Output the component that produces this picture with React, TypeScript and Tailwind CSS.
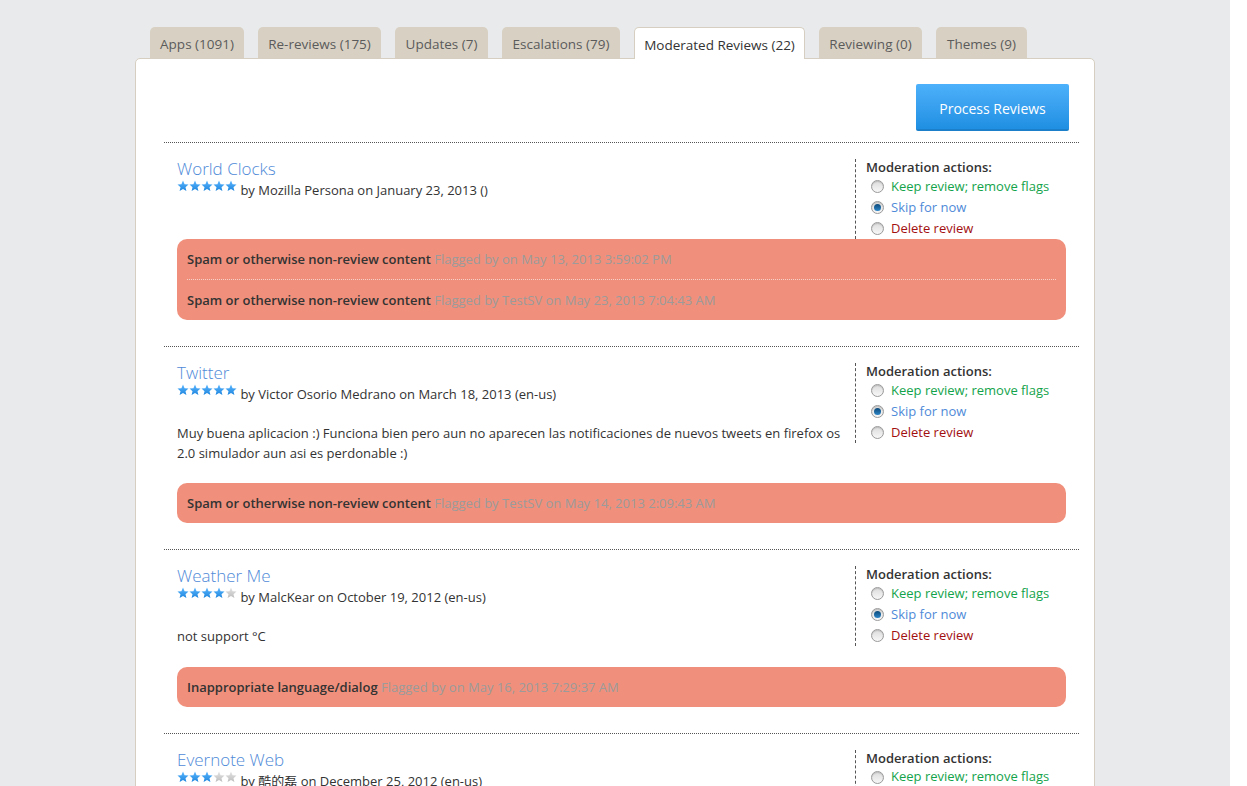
import React from "react";

type Flag = { reason: string; by: string };
type Review = {
    app: string;
    stars: number;
    author: string;
    date: string;
    body?: string;
    flags: Flag[];
};

const tabs = [
    { label: "Apps (1091)", width: "w-[94px]", active: false },
    { label: "Re-reviews (175)", width: "w-[123px]", active: false },
    { label: "Updates (7)", width: "w-[93px]", active: false },
    { label: "Escalations (79)", width: "w-[118px]", active: false },
    { label: "Moderated Reviews (22)", width: "w-[171px]", active: true },
    { label: "Reviewing (0)", width: "w-[103px]", active: false },
    { label: "Themes (9)", width: "w-[91px]", active: false },
];

const reviews: Review[] = [
    {
        app: "World Clocks",
        stars: 5,
        author: "Mozilla Persona",
        date: "January 23, 2013 ()",
        flags: [
            { reason: "Spam or otherwise non-review content", by: "Flagged by on May 13, 2013 3:59:02 PM" },
            { reason: "Spam or otherwise non-review content", by: "Flagged by TestSV on May 23, 2013 7:04:43 AM" },
        ],
    },
    {
        app: "Twitter",
        stars: 5,
        author: "Victor Osorio Medrano",
        date: "March 18, 2013 (en-us)",
        body: "Muy buena aplicacion :) Funciona bien pero aun no aparecen las notificaciones de nuevos tweets en firefox os 2.0 simulador aun asi es perdonable :)",
        flags: [{ reason: "Spam or otherwise non-review content", by: "Flagged by TestSV on May 14, 2013 2:09:43 AM" }],
    },
    {
        app: "Weather Me",
        stars: 4,
        author: "MalcKear",
        date: "October 19, 2012 (en-us)",
        body: "not support °C",
        flags: [{ reason: "Inappropriate language/dialog", by: "Flagged by on May 16, 2013 7:29:37 AM" }],
    },
    {
        app: "Evernote Web",
        stars: 3,
        author: "酷的磊",
        date: "December 25, 2012 (en-us)",
        flags: [],
    },
];

function Stars({ count }: { count: number }) {
    return (
        <span className="relative -top-[3px] inline-flex">
            {[0, 1, 2, 3, 4].map((i) => (
                <svg key={i} width="12" height="12" viewBox="0 0 24 24">
                    <defs>
                        <linearGradient id={`sg${i < count ? "on" : "off"}`} x1="0" y1="0" x2="0" y2="1">
                            <stop offset="0" stopColor={i < count ? "#5bb6ff" : "#e4e4e4"} />
                            <stop offset="1" stopColor={i < count ? "#1f86de" : "#bdbdbd"} />
                        </linearGradient>
                    </defs>
                    <polygon
                        points="12,1 15.1,8.4 23,9.1 17,14.3 18.8,22.1 12,18 5.2,22.1 7,14.3 1,9.1 8.9,8.4"
                        fill={`url(#sg${i < count ? "on" : "off"})`}
                    />
                </svg>
            ))}
        </span>
    );
}

function Radio({ checked }: { checked?: boolean }) {
    return (
        <span className="flex h-[13px] w-[13px] items-center justify-center rounded-full border border-[#9a9a9a] bg-gradient-to-b from-[#dcdcdc] to-[#f7f7f7] shadow-[inset_0_1px_1px_rgba(0,0,0,0.15)]">
            {checked && <span className="h-[7px] w-[7px] rounded-full bg-gradient-to-b from-[#0d4a7a] to-[#2c86c7]" />}
        </span>
    );
}

function ReviewItem({ review }: { review: Review }) {
    return (
        <div className="border-t border-dotted border-[#555] px-[13px] pt-4 pb-[26px]">
            <div className="flex items-start gap-[10px]">
                <div className="flex-1">
                    <h3 className="text-[17px] font-light leading-[20px] text-[#4f8ad8]">{review.app}</h3>
                    <p className="mt-[1px] leading-[20px]">
                        <Stars count={review.stars} /> by {review.author} on {review.date}
                    </p>
                    {review.body && <p className="py-5 leading-[19.5px]">{review.body}</p>}
                </div>
                <div className="w-[211px] border-l border-dashed border-[#555] pl-[10px]">
                    <p className="mb-[1px] leading-[16px] font-semibold text-[#333]">Moderation actions:</p>
                    <label className="flex h-[21px] items-center gap-[7px] pl-[5px] text-[#13a34b]">
                        <Radio /> Keep review; remove flags
                    </label>
                    <label className="flex h-[21px] items-center gap-[7px] pl-[5px] text-[#4f8ad8]">
                        <Radio checked /> Skip for now
                    </label>
                    <label className="flex h-[21px] items-center gap-[7px] pl-[5px] text-[#a20f0f]">
                        <Radio /> Delete review
                    </label>
                </div>
            </div>
            {review.flags.length > 0 && (
                <ul className="rounded-[10px] bg-[#f0907c] px-[10px]">
                    {review.flags.map((f, i) => (
                        <li
                            key={i}
                            className={`py-[10px] leading-[20px] ${i > 0 ? "border-t border-dotted border-[#f7d2c9]" : ""}`}
                        >
                            <span className="font-semibold text-[#333]">{f.reason}</span>{" "}
                            <span className="text-[#9b9b9b]">{f.by}</span>
                        </li>
                    ))}
                </ul>
            )}
        </div>
    );
}

export default function App() {
    return (
        <div
            className="min-h-screen bg-[#e9eaec] text-[13px] text-[#333]"
            style={{ fontFamily: '"Open Sans", "Noto Sans CJK SC", sans-serif' }}
        >
            <div className="flex">
                <div className="w-[1230px] pt-[27px] pl-[135px]">
                    <nav className="flex gap-[14px] pl-[15px] text-[13.5px]">
                        {tabs.map((t) =>
                            t.active ? (
                                <span
                                    key={t.label}
                                    className={`relative z-10 -mb-px h-[32px] ${t.width} rounded-t-[5px] border border-b-0 border-[#d6cfc1] bg-white text-center leading-[34px] whitespace-nowrap text-[#333]`}
                                >
                                    {t.label}
                                </span>
                            ) : (
                                <span
                                    key={t.label}
                                    className={`h-[31px] ${t.width} rounded-t-[5px] bg-[#d8d1c3] text-center leading-[34px] whitespace-nowrap text-[#5b5b5b]`}
                                >
                                    {t.label}
                                </span>
                            )
                        )}
                    </nav>
                    <section className="w-[960px] rounded-[5px] border border-[#d6cfc1] bg-white pr-[15px] pl-[28px] pt-[25px]">
                        <div className="flex justify-end pr-[10px] pb-[11px]">
                            <button className="h-[47px] w-[153px] rounded-[2px] border-b-2 border-[#1b7fc9] bg-gradient-to-b from-[#4db1fb] to-[#1e8fe2] pt-[3px] text-[14px] text-white">
                                Process Reviews
                            </button>
                        </div>
                        {reviews.map((r) => (
                            <ReviewItem key={r.app} review={r} />
                        ))}
                    </section>
                </div>
                <div className="min-h-screen flex-1 bg-white" />
            </div>
        </div>
    );
}
